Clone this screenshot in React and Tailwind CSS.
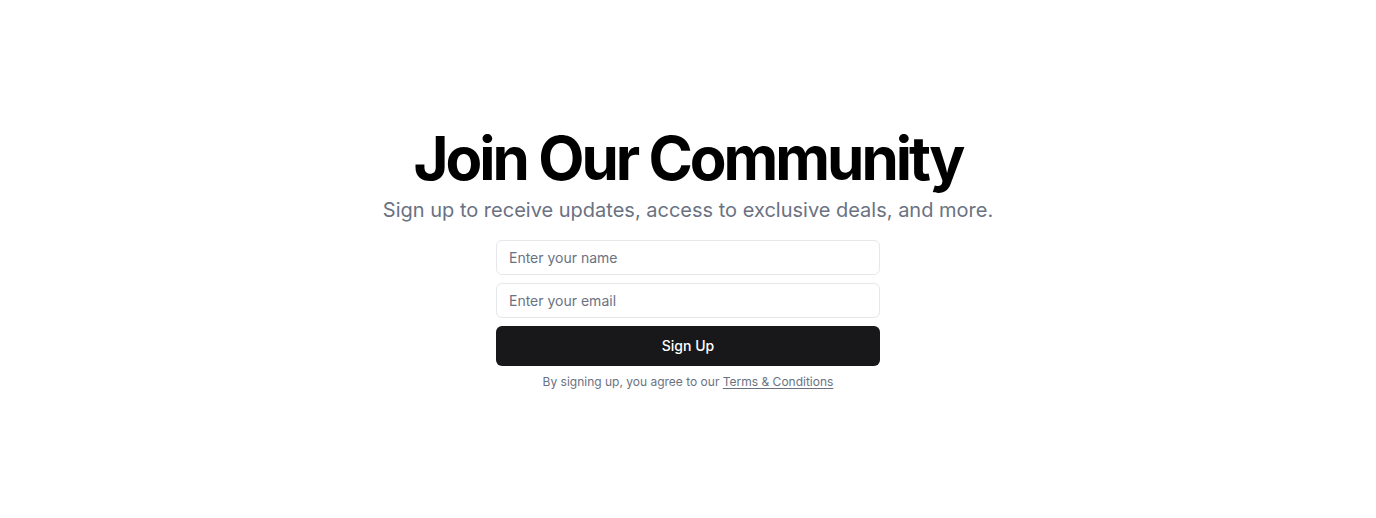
export default function App() {
  return (
    <div
      className="flex h-screen w-full items-center justify-center bg-white"
      style={{ fontFamily: "Inter, 'Noto Sans', sans-serif" }}
    >
      <div className="flex flex-col items-center space-y-4 text-center">
        <div className="space-y-2">
          <h1 className="text-6xl font-bold tracking-tighter text-black">
            Join Our Community
          </h1>
          <p className="text-xl text-gray-500">
            Sign up to receive updates, access to exclusive deals, and more.
          </p>
        </div>
        <div className="w-full max-w-sm space-y-2">
          <form className="flex flex-col gap-2">
            <input
              type="text"
              placeholder="Enter your name"
              className="h-[35px] w-full rounded-md border border-gray-200 px-3 text-sm placeholder:text-gray-500"
            />
            <input
              type="email"
              placeholder="Enter your email"
              className="h-[35px] w-full rounded-md border border-gray-200 px-3 text-sm placeholder:text-gray-500"
            />
            <button
              type="submit"
              className="h-10 w-full rounded-md bg-[#18181b] text-sm font-medium text-white"
            >
              Sign Up
            </button>
          </form>
          <p className="text-xs text-gray-500">
            By signing up, you agree to our{" "}
            <a href="#" className="underline underline-offset-2">
              Terms &amp; Conditions
            </a>
          </p>
        </div>
      </div>
    </div>
  );
}
